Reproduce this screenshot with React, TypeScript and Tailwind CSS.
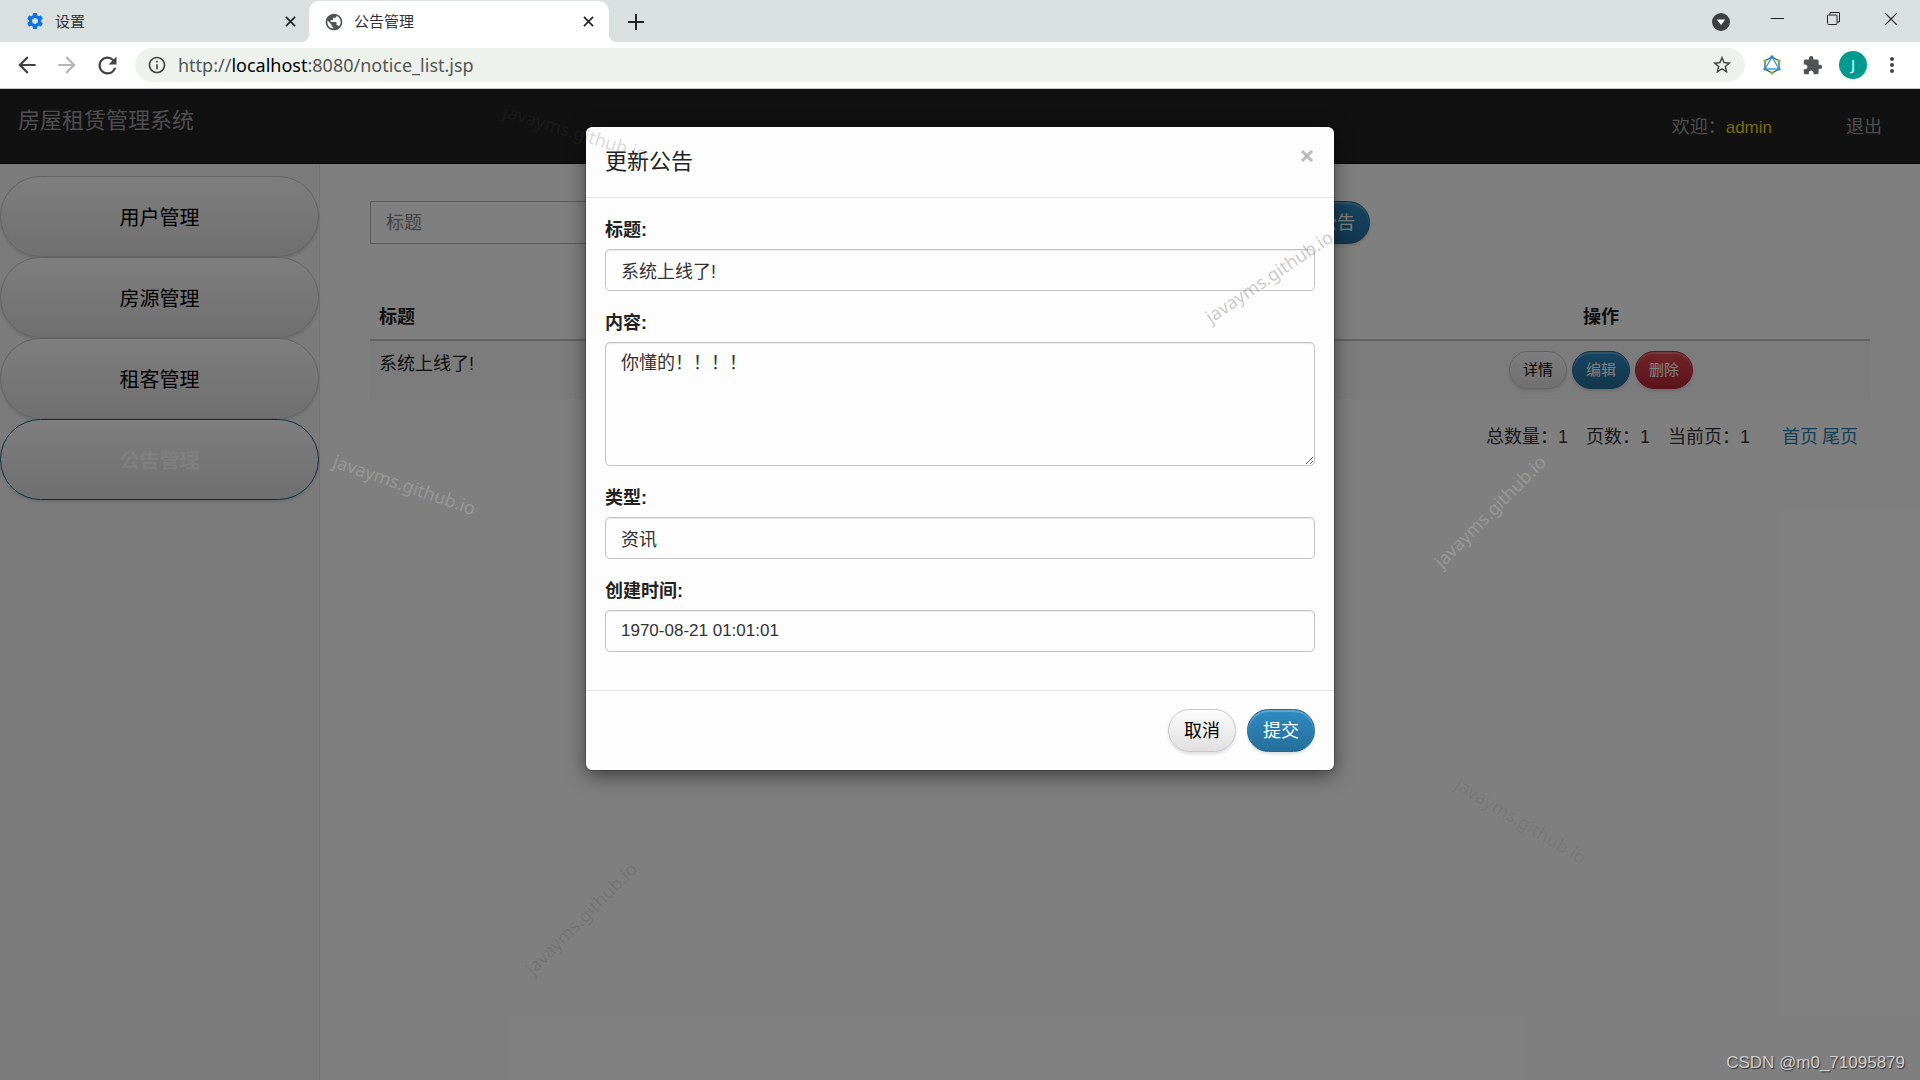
import { useState } from "react";
import {
  MdArrowBack,
  MdArrowForward,
  MdExtension,
  MdInfoOutline,
  MdMoreVert,
  MdPublic,
  MdRefresh,
  MdSettings,
  MdStarBorder,
} from "react-icons/md";

const menuItems = ["用户管理", "房源管理", "租客管理", "公告管理"];

const watermarks = [
  "left-[504px] top-[7px] rotate-[17deg] text-[#404040]/20",
  "left-[334px] top-[357px] rotate-[19deg] text-white/20",
  "left-[1207px] top-[215px] rotate-[-34deg] text-[#505050]/30",
  "left-[1437px] top-[461px] rotate-[-45deg] text-white/20",
  "left-[528px] top-[868px] rotate-[-45deg] text-black/10",
  "left-[1457px] top-[679px] rotate-[31deg] text-black/7",
];

const btn = "rounded-full border cursor-pointer";
const btnDefault =
  "border-[#c8c8c8] bg-linear-to-b from-[#fcfcfc] to-[#e0e0e0] text-black shadow-[inset_0_1px_0_rgba(255,255,255,0.4),0_2px_3px_rgba(0,0,0,0.12)]";
const btnPrimary =
  "border-[#1f6a94] bg-linear-to-b from-[#2f8ac2] to-[#276f9a] text-white shadow-[inset_0_2px_1px_rgba(255,255,255,0.25),0_2px_3px_rgba(0,0,0,0.12)]";
const btnDanger =
  "border-[#b52a38] bg-linear-to-b from-[#e04a55] to-[#b82834] text-white shadow-[inset_0_2px_1px_rgba(255,255,255,0.25),0_2px_3px_rgba(0,0,0,0.12)]";

const field =
  "block w-full rounded-[5px] border border-[#c4c4c4] bg-[#fdfdfd] px-[15px] text-[#333] shadow-[inset_0_1px_1px_rgba(0,0,0,0.075)]";

function CloseIcon({ className }: { className: string }) {
  return (
    <svg viewBox="0 0 12 12" className={className} fill="none" stroke="currentColor">
      <path d="M1 1l10 10M11 1L1 11" />
    </svg>
  );
}

function HexagonIcon() {
  return (
    <svg viewBox="0 0 20 20" className="size-5" fill="none">
      <path d="M10 2l7 4v8l-7 4-7-4V6z" stroke="#555" strokeWidth="1.3" />
      <path d="M10 2l7 12H3z" stroke="#3a9fd0" strokeWidth="1.4" fill="#fff" />
      <g fill="#7bc143">
        <circle cx="3" cy="6" r="1.7" />
        <circle cx="17" cy="6" r="1.7" />
        <circle cx="10" cy="18" r="1.7" />
      </g>
      <g fill="#2b93cc">
        <circle cx="10" cy="2.2" r="1.9" />
        <circle cx="3" cy="14" r="1.7" />
        <circle cx="17" cy="14" r="1.7" />
      </g>
    </svg>
  );
}

function BrowserChrome() {
  return (
    <header className="shrink-0 font-['Noto_Sans','Noto_Sans_CJK_SC',sans-serif] text-[#333]">
      {/* Tab strip */}
      <div className="flex h-[42px] items-center bg-[#dae0df] pt-px text-[15px]">
        <div className="flex w-[309px] items-center pr-[13px] pl-[25px]">
          <MdSettings className="mr-2.5 size-5 text-[#0d74e8]" />
          <span>设置</span>
          <button aria-label="关闭设置" className="ml-auto">
            <CloseIcon className="size-[11px] stroke-[1.8] text-[#222]" />
          </button>
        </div>
        <div className="relative flex h-full w-[300px] items-center rounded-t-[10px] bg-white pr-[15px] pl-[15px]">
          <span className="absolute bottom-0 -left-2 size-2 bg-[radial-gradient(circle_at_0_0,transparent_8px,white_8px)]" />
          <span className="absolute -right-2 bottom-0 size-2 bg-[radial-gradient(circle_at_100%_0,transparent_8px,white_8px)]" />
          <MdPublic className="mr-2.5 size-5 text-[#505455]" />
          <span>公告管理</span>
          <button aria-label="关闭公告管理" className="ml-auto">
            <CloseIcon className="size-[11px] stroke-[1.8] text-[#222]" />
          </button>
        </div>
        <button aria-label="新标签页" className="ml-[19px]">
          <svg viewBox="0 0 16 16" className="size-4" stroke="#222" strokeWidth="2">
            <path d="M8 0v16M0 8h16" />
          </svg>
        </button>
        <div className="mr-[22px] ml-auto flex items-center text-[#222]">
          <button aria-label="搜索标签页" className="mr-[41px]">
            <svg viewBox="0 0 18 18" className="size-[18px]">
              <circle cx="9" cy="9" r="9" fill="#3c4043" />
              <path d="M4.8 6.5h8.4L9 12z" fill="#fff" />
            </svg>
          </button>
          <button aria-label="最小化" className="mr-[43px]">
            <svg viewBox="0 0 13 13" className="-mt-1.5 size-[13px]" stroke="currentColor">
              <path d="M0 6.5h13" />
            </svg>
          </button>
          <button aria-label="还原" className="mr-[44px]">
            <svg viewBox="0 0 13 13" className="-mt-1.5 size-[13px]" fill="none" stroke="currentColor">
              <rect x="0.5" y="3" width="9.5" height="9.5" rx="1" />
              <path d="M3 3V.5h9.5V10H10" />
            </svg>
          </button>
          <button aria-label="关闭">
            <CloseIcon className="-mt-1.5 size-[14px]" />
          </button>
        </div>
      </div>

      {/* Toolbar */}
      <div className="flex h-[47px] items-center border-b border-[#c9cbcb] bg-white pr-4 pl-[14px]">
        <button aria-label="后退">
          <MdArrowBack className="size-[26px] text-[#444]" />
        </button>
        <button aria-label="前进" className="ml-[14px]">
          <MdArrowForward className="size-[26px] text-[#b5b5b5]" />
        </button>
        <button aria-label="重新加载" className="ml-[14px]">
          <MdRefresh className="size-[27px] text-[#444]" />
        </button>
        <div className="ml-[14px] flex h-[34px] flex-1 items-center rounded-full bg-[#edf2ed] pr-3 pl-3">
          <MdInfoOutline className="mr-[11px] size-5 text-[#444]" />
          <span className="flex-1 text-lg text-[#555]">
            http://<span className="text-black">localhost</span>:8080/notice_list.jsp
          </span>
          <button aria-label="收藏">
            <MdStarBorder className="size-[22px] text-[#444]" />
          </button>
        </div>
        <div className="ml-[17px] flex items-center">
          <button aria-label="扩展">
            <HexagonIcon />
          </button>
          <button aria-label="扩展程序" className="ml-5">
            <MdExtension className="size-[21px] text-[#505455]" />
          </button>
          <button className="ml-4 size-7 rounded-full bg-[#009b8e] text-[15px] text-white">J</button>
          <button aria-label="更多" className="ml-[13px]">
            <MdMoreVert className="size-6 text-[#444]" />
          </button>
        </div>
      </div>
    </header>
  );
}

function NoticePage() {
  return (
    <div className="flex h-full flex-col bg-white">
      <nav className="flex h-[75px] shrink-0 items-start justify-between border-b border-[#080808] bg-[#222] pr-[38px] pl-[18px] text-[#9d9d9d]">
        <a href="#" className="mt-4 text-[22px] leading-8">
          房屋租赁管理系统
        </a>
        <div className="mt-[25px] flex gap-[74px] leading-[26px]">
          <span>
            欢迎：<span className="text-[17px] text-[#e3d61c]">admin</span>
          </span>
          <a href="#">退出</a>
        </div>
      </nav>

      <div className="flex flex-1">
        <aside className="flex w-1/6 flex-col border-r border-[#e8e8e8] bg-[#f6f6f6] pt-3">
          {menuItems.map((item) => (
            <button
              key={item}
              className={
                item === "公告管理"
                  ? `${btn} ${btnDefault} h-[81px] border-[#1a5f88]! pt-0.5 text-xl font-bold text-white!`
                  : `${btn} ${btnDefault} h-[81px] pt-0.5 text-xl`
              }
            >
              {item}
            </button>
          ))}
        </aside>

        <main className="flex-1 px-[50px] pt-[37px]">
          <form className="flex h-[43px] w-[1000px] max-w-full justify-between">
            <input
              type="text"
              aria-label="标题"
              placeholder="标题"
              className="h-[43px] w-[400px] border border-[#b4b4b4] px-[15px] pt-0.5 placeholder:text-[#888]"
            />
            <button type="button" className={`${btn} ${btnPrimary} px-[14px]`}>
              添加公告
            </button>
          </form>

          <table className="mt-12 w-full table-fixed leading-[26px]">
            <thead>
              <tr className="border-b-2 border-[#c4c4c4] text-[#222]">
                <th className="w-[64%] px-[9px] pt-3 pb-[9px] text-left">标题</th>
                <th className="pt-3 pr-[7px] pb-[9px] pl-[9px] text-center">操作</th>
              </tr>
            </thead>
            <tbody>
              <tr className="bg-[#f8f8f8] align-top text-[#222]">
                <td className="px-[9px] py-[10px]">系统上线了!</td>
                <td className="py-[10px] pr-[7px] pl-[9px]">
                  <div className="flex justify-center gap-[5px] text-[15px]">
                    <button className={`${btn} ${btnDefault} h-[38px] w-[58px]`}>详情</button>
                    <button className={`${btn} ${btnPrimary} h-[38px] w-[58px]`}>编辑</button>
                    <button className={`${btn} ${btnDanger} h-[38px] w-[58px]`}>删除</button>
                  </div>
                </td>
              </tr>
            </tbody>
          </table>

          <div className="mt-[25px] flex justify-end pr-3 leading-[26px] text-[#333]">
            <span className="mr-[18px]">总数量：1</span>
            <span className="mr-[18px]">页数：1</span>
            <span className="mr-8">当前页：1</span>
            <a href="#" className="mr-1 text-[#2a7fae]">
              首页
            </a>
            <a href="#" className="text-[#2a7fae]">
              尾页
            </a>
          </div>
        </main>
      </div>
    </div>
  );
}

export default function App() {
  const [formData, setFormData] = useState({
    title: "系统上线了!",
    content: "你懂的！！！！",
    type: "资讯",
    createTime: "1970-08-21 01:01:01",
  });

  return (
    <div className="flex h-screen flex-col overflow-hidden font-['Liberation_Sans','Noto_Sans_CJK_SC',sans-serif] text-lg">
      <BrowserChrome />

      <div className="relative flex-1 overflow-hidden">
        <NoticePage />

        {/* Backdrop and dialog */}
        <div className="absolute inset-0 flex items-start justify-center bg-black/50 pt-[38px]">
          <div
            role="dialog"
            aria-labelledby="dialog-title"
            className="w-full max-w-[748px] rounded-[6px] bg-[#fdfdfd] text-[#222] shadow-[0_0_0_1px_rgba(0,0,0,0.2),0_6px_19px_rgba(0,0,0,0.5)]"
          >
            <div className="flex h-[71px] items-start justify-between border-b border-[#e5e5e5] px-[19px] pt-[19px]">
              <h4 id="dialog-title" className="text-[22px] leading-8">
                更新公告
              </h4>
              <button aria-label="关闭对话框" className="mt-1 mr-0.5 text-[#bbb]">
                <CloseIcon className="size-3 stroke-3" />
              </button>
            </div>

            <form className="p-[19px]">
              <div className="mb-[19px]">
                <label htmlFor="title" className="mb-1.5 block leading-[26px] font-bold">
                  标题:
                </label>
                <input
                  id="title"
                  type="text"
                  value={formData.title}
                  onChange={(e) => setFormData({ ...formData, title: e.target.value })}
                  className={`${field} h-[42px]`}
                />
              </div>
              <div className="mb-[19px]">
                <label htmlFor="content" className="mb-1.5 block leading-[26px] font-bold">
                  内容:
                </label>
                <textarea
                  id="content"
                  value={formData.content}
                  onChange={(e) => setFormData({ ...formData, content: e.target.value })}
                  className={`${field} h-[124px] resize py-[7px] leading-[26px]`}
                />
              </div>
              <div className="mb-[19px]">
                <label htmlFor="type" className="mb-1.5 block leading-[26px] font-bold">
                  类型:
                </label>
                <input
                  id="type"
                  type="text"
                  value={formData.type}
                  onChange={(e) => setFormData({ ...formData, type: e.target.value })}
                  className={`${field} h-[42px]`}
                />
              </div>
              <div className="mb-[19px]">
                <label htmlFor="createTime" className="mb-1.5 block leading-[26px] font-bold">
                  创建时间:
                </label>
                <input
                  id="createTime"
                  type="text"
                  value={formData.createTime}
                  onChange={(e) => setFormData({ ...formData, createTime: e.target.value })}
                  className={`${field} h-[42px] text-[17px]`}
                />
              </div>
            </form>

            <div className="flex justify-end gap-[11px] border-t border-[#e5e5e5] px-[19px] py-[18px]">
              <button type="button" className={`${btn} ${btnDefault} h-[43px] w-[68px]`}>
                取消
              </button>
              <button type="button" className={`${btn} ${btnPrimary} h-[43px] w-[68px]`}>
                提交
              </button>
            </div>
          </div>
        </div>

        <div className="pointer-events-none absolute inset-0 font-['Noto_Sans',sans-serif]">
          {watermarks.map((place) => (
            <span key={place} className={`absolute origin-left text-lg leading-7 ${place}`}>
              javayms.github.io
            </span>
          ))}
          <span className="absolute right-[15px] bottom-1 font-['Liberation_Sans',sans-serif] text-[17px] text-[#ccc] [text-shadow:1px_1px_1px_rgba(0,0,0,0.6)]">
            CSDN @m0_71095879
          </span>
        </div>
      </div>
    </div>
  );
}
